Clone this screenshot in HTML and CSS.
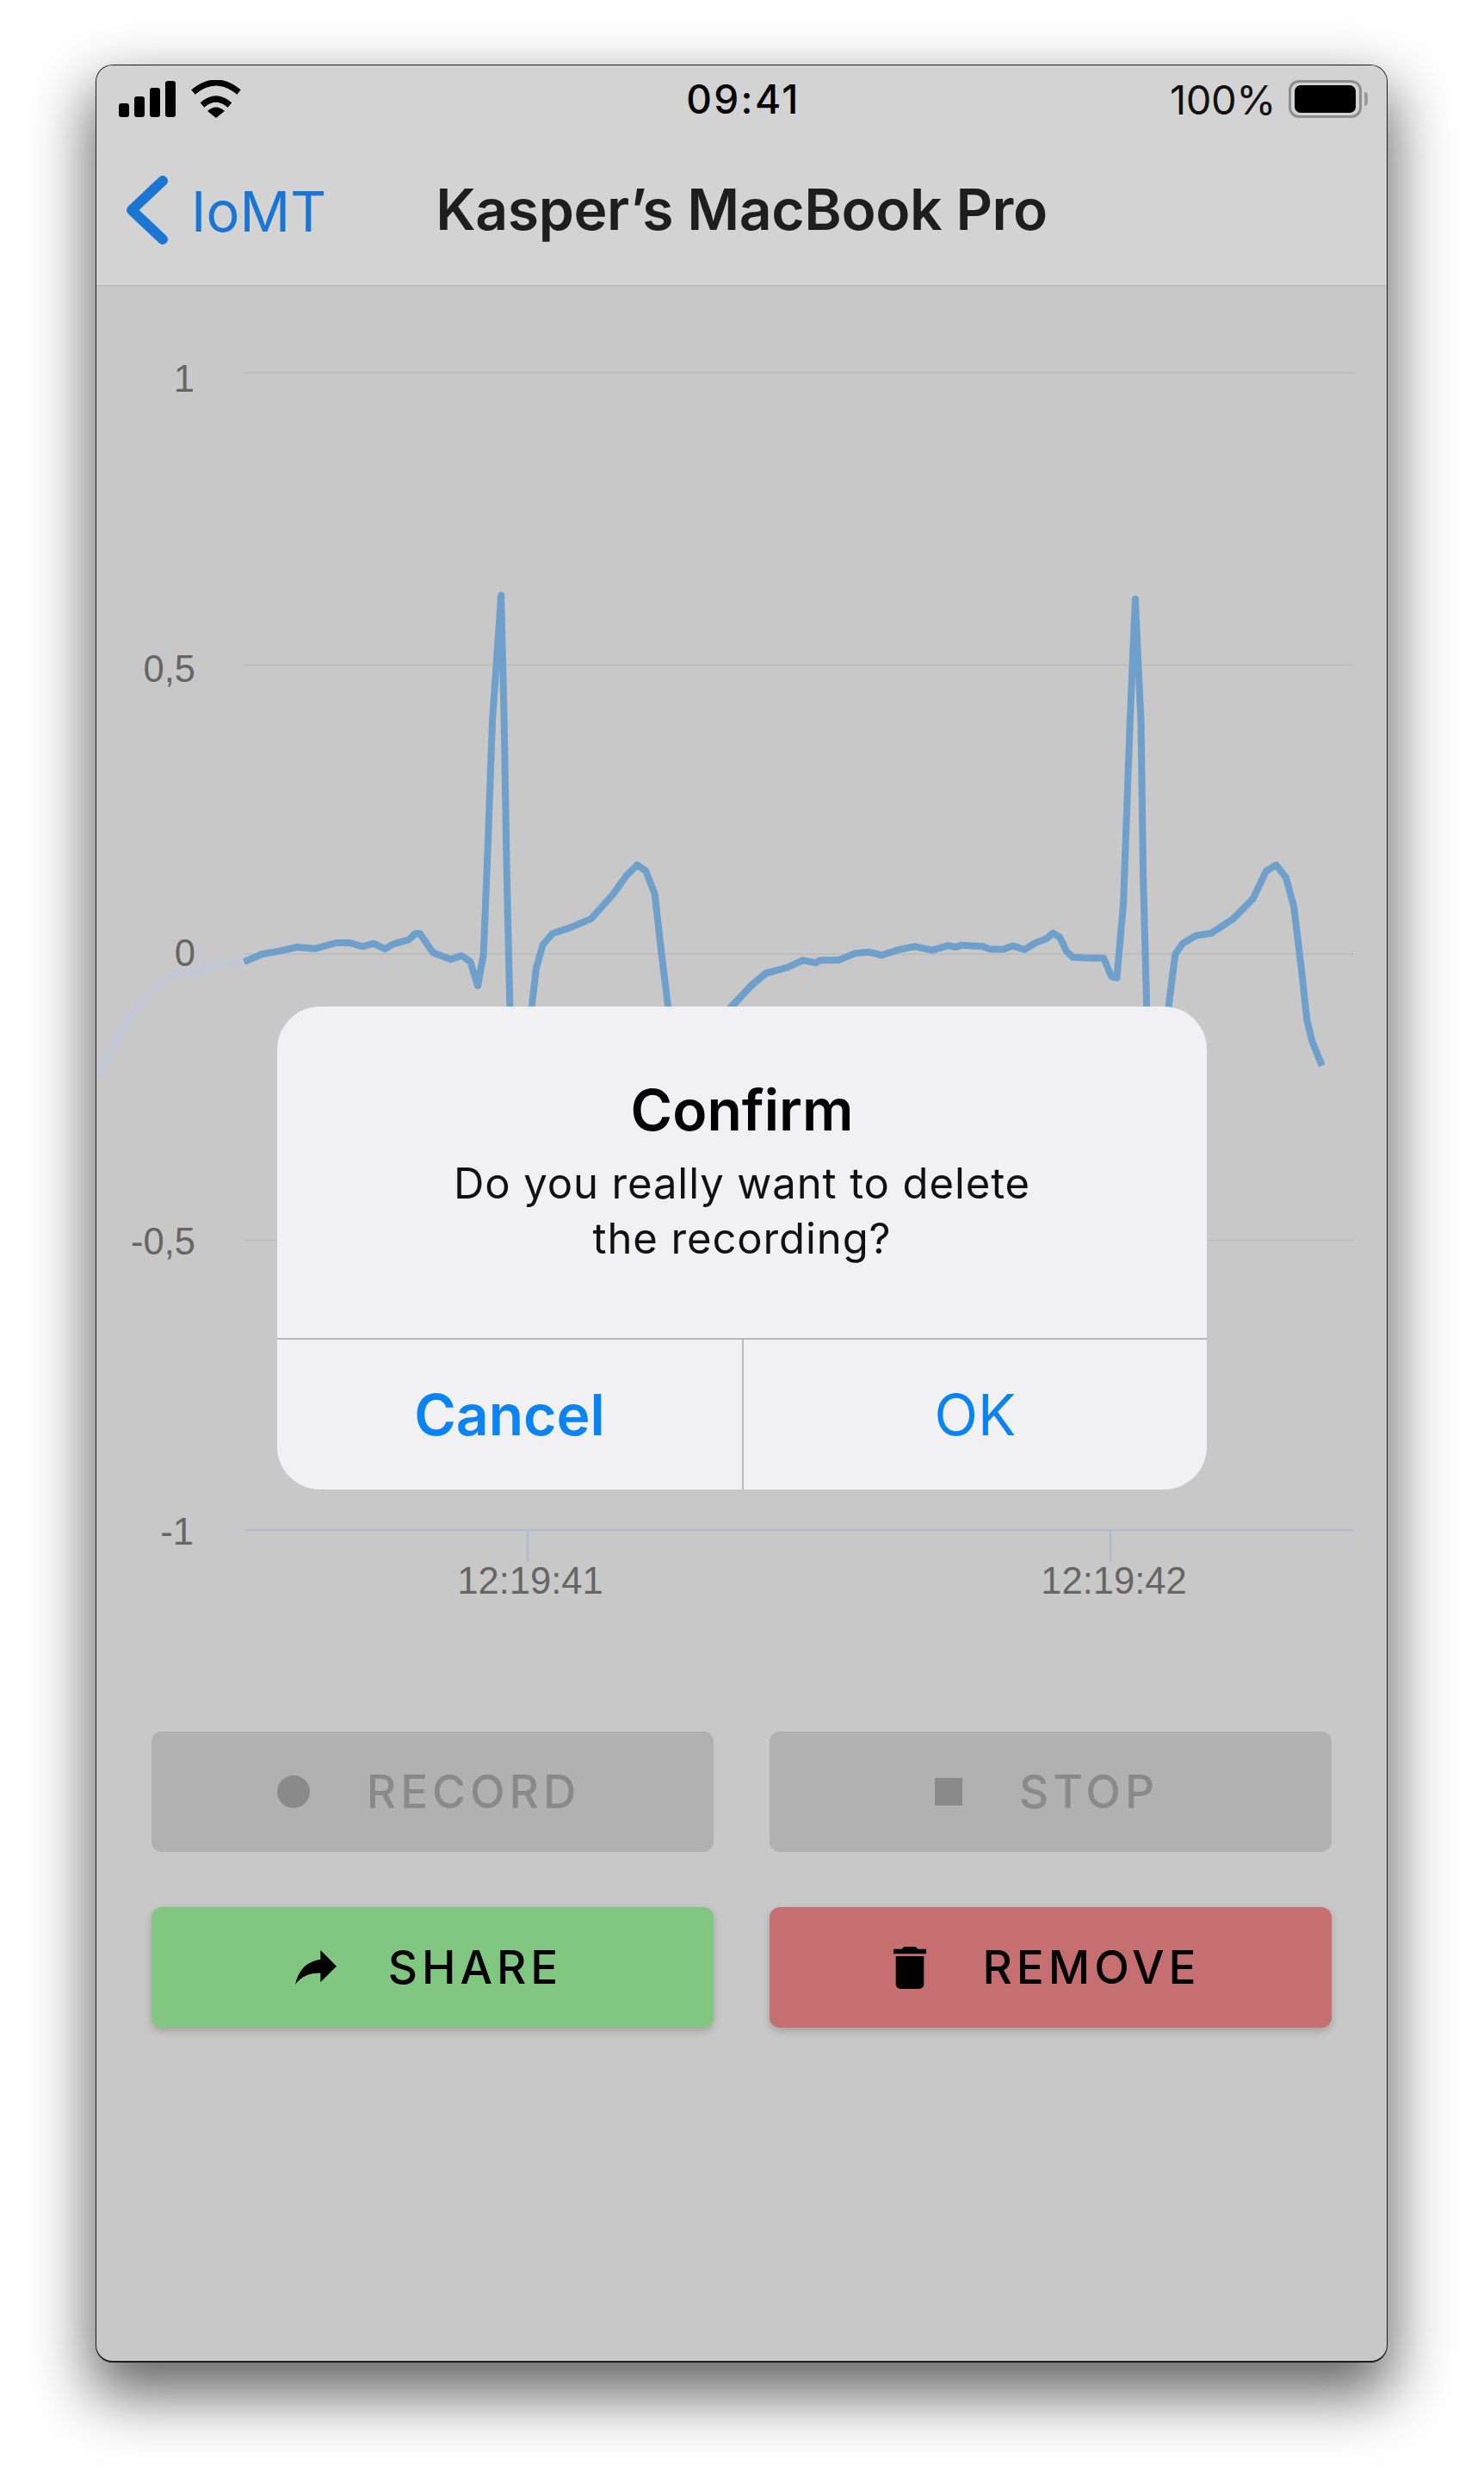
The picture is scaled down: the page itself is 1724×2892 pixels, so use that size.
FILE: index.html
```html
<!DOCTYPE html>
<html lang="en">
<head>
<meta charset="utf-8">
<title>Kasper's MacBook Pro</title>
<link rel="stylesheet" href="styles.css">
</head>
<body>
<main class="phone">
  <header class="topbar">
    <div class="status">
      <div class="status-left">
        <div class="signal"><i class="b1"></i><i class="b2"></i><i class="b3"></i><i class="b4"></i></div>
        <svg class="wifi" viewBox="0 0 60 44"><path class="wifi-arc" d="M3.5 14Q30-8 56.500 14"/><path class="wifi-arc" d="M14 29Q30 15 46 29"/><path d="M20 36Q30 27 40 36L30 44Z"/></svg>
      </div>
      <div class="time">09:41</div>
      <div class="status-right">
        <span class="pct">100%</span>
        <div class="battery"><div class="battery-fill"></div></div>
        <div class="nub"></div>
      </div>
    </div>
    <nav class="nav">
      <div class="back">
        <svg class="chevron" viewBox="0 0 49 80"><path d="M43 6L7 40L43 74"/></svg>
        <span class="back-label">IoMT</span>
      </div>
      <h1 class="title">Kasper’s MacBook Pro</h1>
    </nav>
  </header>

  <section class="chart">
    <svg class="chart-svg" viewBox="112 333 1499 1650">
      <g class="grid">
        <line x1="284" x2="1572" y1="433" y2="433"/>
        <line x1="284" x2="1572" y1="772.500" y2="772.500"/>
        <line x1="284" x2="1572" y1="1108" y2="1108"/>
        <line x1="284" x2="1572" y1="1440.500" y2="1440.500"/>
      </g>
      <g class="axis">
        <line x1="284" x2="1572" y1="1777" y2="1777"/>
        <line x1="613" x2="613" y1="1777" y2="1814"/>
        <line x1="1290" x2="1290" y1="1777" y2="1814"/>
      </g>
      <g class="ylabels">
        <text x="226" y="455">1</text>
        <text x="227" y="792">0,5</text>
        <text x="227" y="1122">0</text>
        <text x="227" y="1457">-0,5</text>
        <text x="225" y="1794">-1</text>
      </g>
      <g class="xlabels">
        <text x="616" y="1851">12:19:41</text>
        <text x="1294" y="1851">12:19:42</text>
      </g>
      <g transform="translate(100 660) scale(.5102 .35714)">
        <polyline class="trace-fade" points="25,1650 55,1568 100,1460 150,1370 200,1315 250,1315 290,1290 360,1280"/>
        <polyline class="trace" points="360,1280 400,1255 440,1245 480,1232 520,1237 570,1218 600,1218 630,1230 655,1220 680,1238 700,1222 735,1208 750,1188 760,1188 790,1250 830,1272 855,1260 875,1280 892,1358 905,1255 915,900 925,500 945,88 952,500 958,1000 965,1424 985,1800 1015,1424 1025,1300 1040,1225 1062,1188 1100,1170 1150,1140 1200,1060 1230,1000 1255,965 1275,985 1295,1060 1310,1250 1325,1424 1350,1700 1470,1424 1520,1350 1550,1315 1568,1310"/>
      </g>
      <g transform="translate(800 660) scale(.5102 .35714)">
        <polyline class="trace" points="100,1424 140,1360 175,1318 225,1298 260,1275 290,1283 300,1275 340,1275 380,1252 410,1248 440,1258 480,1240 515,1230 555,1242 590,1227 610,1232 620,1226 670,1230 685,1238 715,1240 738,1228 765,1240 790,1218 815,1205 830,1186 845,1200 860,1245 875,1265 900,1267 945,1268 963,1328 975,1332 990,1090 1005,500 1017,100 1030,500 1035,1000 1043,1424 1065,1800 1093,1424 1108,1255 1125,1220 1155,1195 1190,1187 1240,1140 1285,1075 1315,985 1338,965 1360,1005 1378,1100 1395,1300 1408,1470 1420,1540 1442,1618"/>
      </g>
    </svg>
  </section>

  <section class="actions">
    <button class="btn btn-off"><svg class="ico ico-rec" viewBox="0 0 38 38"><circle cx="19" cy="19" r="19"/></svg><span>RECORD</span></button>
    <button class="btn btn-off"><svg class="ico ico-stop" viewBox="0 0 32 32"><rect width="32" height="32"/></svg><span>STOP</span></button>
    <button class="btn btn-share"><svg class="ico ico-share" viewBox="3 5 18 15"><path d="M14 9V5l7 7-7 7v-4.100c-5 0-8.500 1.600-11 5.100 1-5 4-10 11-11z"/></svg><span>SHARE</span></button>
    <button class="btn btn-remove"><svg class="ico ico-trash" viewBox="5 3 14 18"><path d="M6 19c0 1.100.9 2 2 2h8c1.100 0 2-.9 2-2V7H6v12zM19 4h-3.500l-1-1h-5l-1 1H5v2h14V4z"/></svg><span>REMOVE</span></button>
  </section>

  <div class="dialog" role="alertdialog">
    <div class="dialog-body">
      <h2 class="dialog-title">Confirm</h2>
      <p class="dialog-msg">Do you really want to delete<br>the recording?</p>
    </div>
    <div class="dialog-actions">
      <div class="dlg-btn dlg-cancel">Cancel</div>
      <div class="dlg-btn dlg-ok">OK</div>
    </div>
  </div>
</main>
</body>
</html>
```
FILE: styles.css
```css
* { box-sizing: border-box; }
html, body { margin: 0; padding: 0; }
body { width: 1724px; height: 2892px; background: #fff; overflow: hidden; font-family: Inter, "Liberation Sans", sans-serif; }

.phone {
  position: relative;
  width: 1501px;
  height: 2669px;
  margin: 75px 0 0 111px;
  background: #c8c8c8;
  border: 1px solid #1c1c1c;
  border-bottom-width: 2px;
  border-radius: 20px;
  box-shadow: 0 32px 70px 6px rgba(0,0,0,.6);
  overflow: visible;
}

.topbar { height: 257px; background: #d3d3d3; border-bottom: 2px solid #bfbfbf; border-radius: 19px 19px 0 0; }

.status { display: grid; grid-template-columns: 1fr auto 1fr; align-items: center; height: 86px; padding: 0 22px 8px 26px; color: #000; }
.status-left { display: flex; align-items: center; gap: 17px; }
.signal { display: flex; align-items: flex-end; gap: 6px; height: 42px; }
.signal i { display: block; width: 12px; background: #000; border-radius: 3px; }
.b1 { height: 16px; }
.b2 { height: 24px; }
.b3 { height: 34px; }
.b4 { height: 42px; }
.wifi { width: 60px; height: 44px; }
.wifi-arc { fill: none; stroke: #000; stroke-width: 7; }
.time { font-size: 46px; font-weight: 500; letter-spacing: 2.4px; }
.status-right { display: flex; align-items: center; justify-content: flex-end; }
.pct { font-size: 47px; font-weight: 400; color: #111; margin-right: 15px; letter-spacing: -0.4px; }
.battery { width: 85px; height: 44px; padding: 3px 4px; border: 3px solid #8f8f8f; border-radius: 12px; }
.battery-fill { width: 100%; height: 100%; background: #000; border-radius: 7px; }
.nub { width: 4px; height: 16px; margin-left: 3px; background: #9a9a9a; border-radius: 0 4px 4px 0; }

.nav { position: relative; display: flex; align-items: center; justify-content: center; height: 148px; }
.back { position: absolute; left: 34px; top: 40px; display: flex; align-items: center; color: #1a76d2; font-size: 65px; gap: 27px; }
.back-label { margin-top: 4px; }
.chevron { width: 49px; height: 80px; fill: none; stroke: currentColor; stroke-width: 12; stroke-linecap: round; stroke-linejoin: round; }
.title { margin: 14px 0 0; font-size: 66px; font-weight: 600; letter-spacing: -0.4px; color: #1e1e1e; }

.chart { height: 1650px; }
.chart-svg { display: block; width: 1499px; height: 1650px; }
.grid line { stroke: #bdbdbd; stroke-width: 2; }
.axis line { stroke: #b2bacd; stroke-width: 2.500; }
.ylabels text, .xlabels text { font-family: "Liberation Sans", Arial, sans-serif; font-size: 43.500px; fill: #666; }
.ylabels text { text-anchor: end; }
.xlabels text { text-anchor: middle; }
.trace, .trace-fade { fill: none; stroke-width: 8; stroke-linejoin: round; vector-effect: non-scaling-stroke; }
.trace { stroke: #6f9fcb; }
.trace-fade { stroke: #c1c7d5; }

.actions { display: grid; grid-template-columns: 653px 653px; grid-auto-rows: 140px; gap: 64px 65px; margin-top: 28px; padding-left: 64px; }
.btn { display: flex; align-items: center; justify-content: center; gap: 66px; border: 0; border-radius: 12px; padding: 0 9px 0 0; font: 500 53px Inter, "Liberation Sans", sans-serif; letter-spacing: 5px; color: #000; }
.btn-off { background: #b1b1b1; color: #8a8a8a; }
.btn-share { gap: 60px; background: #81c781; box-shadow: 0 4px 10px rgba(0,0,0,.2); }
.btn-remove { background: #c56f71; box-shadow: 0 4px 10px rgba(0,0,0,.2); }
.ico { display: block; fill: currentColor; }
.ico-rec { width: 38px; height: 38px; }
.ico-stop { width: 32px; height: 32px; }
.ico-share { width: 48px; height: 40px; }
.ico-trash { width: 38px; height: 49px; }

.dialog { position: absolute; left: 210px; top: 1093px; width: 1080px; height: 561px; display: flex; flex-direction: column; background: #f1f1f3; border-radius: 50px; overflow: hidden; }
.dialog-body { height: 385px; padding-top: 80px; text-align: center; color: #000; }
.dialog-title { margin: 0 0 14px; font-size: 66px; line-height: 80px; font-weight: 600; }
.dialog-msg { margin: 0; font-size: 49px; line-height: 64px; letter-spacing: 0.9px; font-weight: 400; color: #111; }
.dialog-actions { flex: 1; display: grid; grid-template-columns: 542px 1fr; border-top: 2px solid #b8b8ba; }
.dlg-btn { display: flex; align-items: center; justify-content: center; font-size: 66px; color: #0a84f5; }
.dlg-cancel { font-weight: 600; border-right: 2px solid #bcbcbe; }
```
